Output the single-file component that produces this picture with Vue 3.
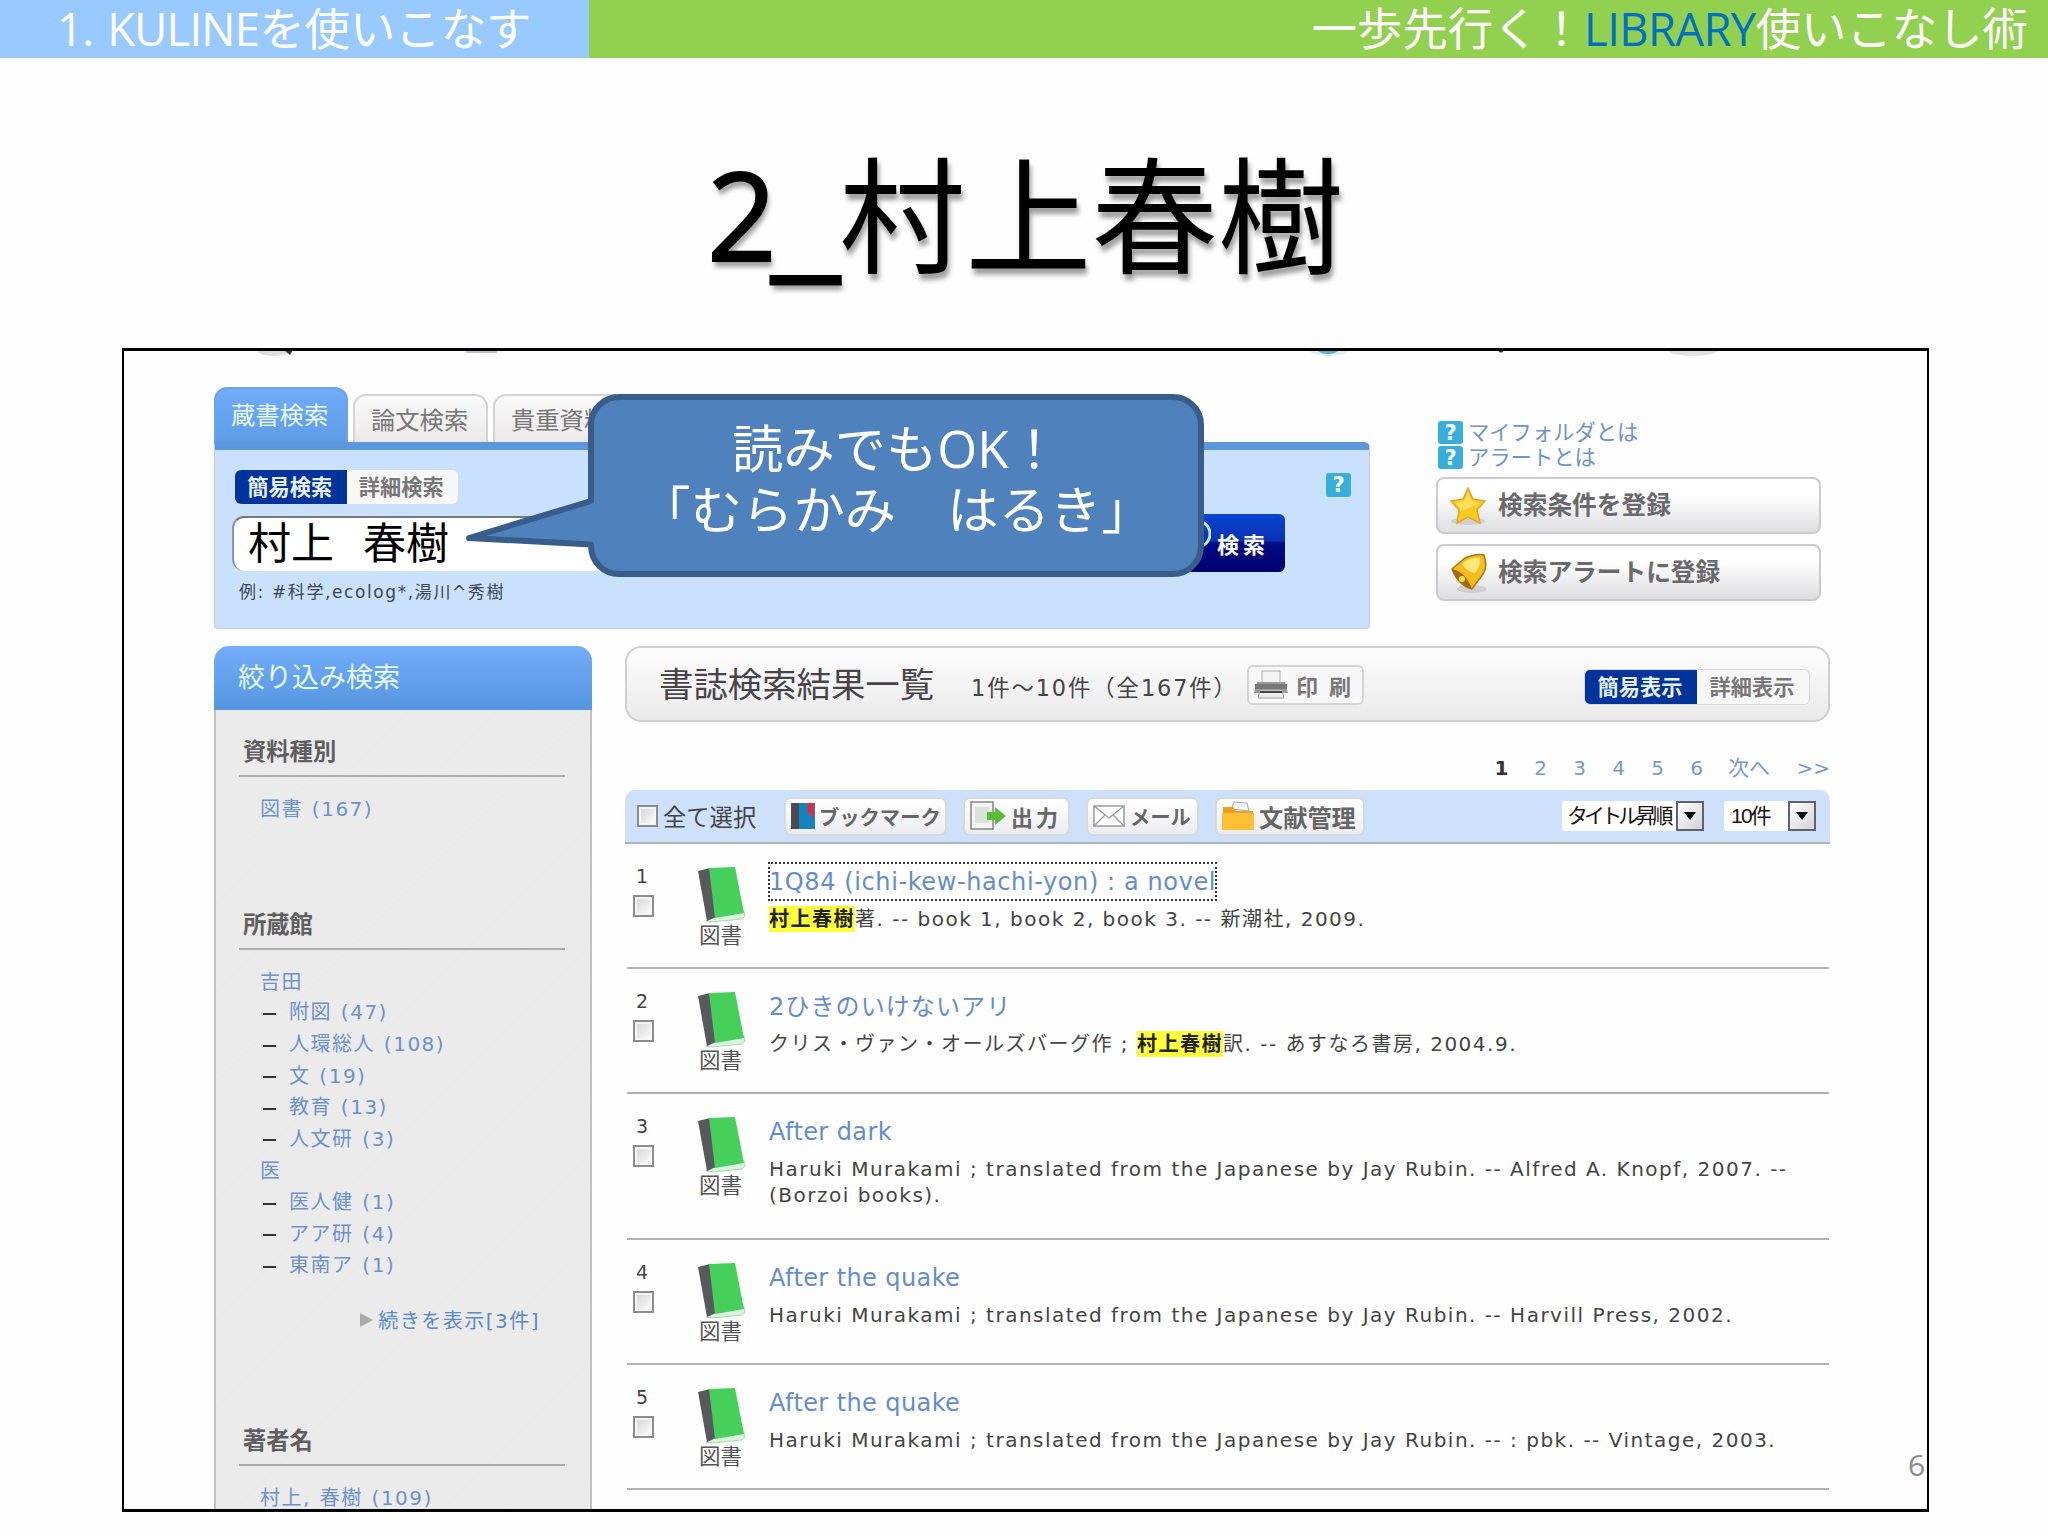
<script setup>
const tabs = [
  { label: "蔵書検索", active: true },
  { label: "論文検索" },
  { label: "貴重資料" },
];

const helpLinks = ["マイフォルダとは", "アラートとは"];

const facets = [
  { title: "資料種別", items: [{ name: "図書", count: 167 }] },
  {
    title: "所蔵館",
    items: [
      { name: "吉田" },
      { name: "附図", count: 47, sub: true },
      { name: "人環総人", count: 108, sub: true },
      { name: "文", count: 19, sub: true },
      { name: "教育", count: 13, sub: true },
      { name: "人文研", count: 3, sub: true },
      { name: "医" },
      { name: "医人健", count: 1, sub: true },
      { name: "アア研", count: 4, sub: true },
      { name: "東南ア", count: 1, sub: true },
    ],
    more: "続きを表示[3件]",
  },
  { title: "著者名", items: [{ name: "村上, 春樹", count: 109 }] },
];

const pages = [1, 2, 3, 4, 5, 6];

const results = [
  { title: "1Q84 (ichi-kew-hachi-yon) : a novel", focused: true, hit: "村上春樹", after: "著. -- book 1, book 2, book 3. -- 新潮社, 2009." },
  { title: "2ひきのいけないアリ", kana: true, before: "クリス・ヴァン・オールズバーグ作 ; ", hit: "村上春樹", after: "訳. -- あすなろ書房, 2004.9." },
  { title: "After dark", tall: true, before: "Haruki Murakami ; translated from the Japanese by Jay Rubin. -- Alfred A. Knopf, 2007. --\n(Borzoi books)." },
  { title: "After the quake", before: "Haruki Murakami ; translated from the Japanese by Jay Rubin. -- Harvill Press, 2002." },
  { title: "After the quake", before: "Haruki Murakami ; translated from the Japanese by Jay Rubin. -- : pbk. -- Vintage, 2003." },
];
</script>

<template>
  <div class="slide">
    <header class="band">
      <div class="band-left"><span class="latin chapter">1. KULINE</span>を使いこなす</div>
      <div class="band-right">一歩先行く！<span class="latin library">LIBRARY</span>使いこなし術</div>
    </header>

    <h1 class="title"><span class="title-num">2</span><span class="title-bar">_</span>村上春樹</h1>

    <section class="shot">
      <!-- 上端で切れているナビアイコンの下側 -->
      <svg class="remnants" width="1803" height="10" viewBox="124 351 1803 10">
        <ellipse cx="274" cy="351" rx="16" ry="5" fill="#dedede" />
        <path d="M284 350h9l-3 5z" fill="#333" />
        <rect x="466" y="350" width="31" height="3" fill="#bcc3c8" />
        <ellipse cx="1329" cy="351" rx="19" ry="5" fill="#e4eef1" />
        <ellipse cx="1328" cy="350" rx="10" ry="4" fill="#54b4cb" />
        <circle cx="1501" cy="350" r="2.5" fill="#333" />
        <ellipse cx="1693" cy="351" rx="24" ry="5" fill="#e2e0e2" />
      </svg>

      <div class="top">
        <div class="search">
          <nav class="tabs">
            <div v-for="t in tabs" :key="t.label" class="tab" :class="{ active: t.active }">{{ t.label }}</div>
          </nav>
          <div class="panel">
            <div class="panel-head">
              <div class="toggle"><span class="on">簡易検索</span><span>詳細検索</span></div>
              <span class="q">?</span>
            </div>
            <div class="query-row">
              <div class="query"><span>村上</span><span>春樹</span></div>
              <div class="go">
                <svg width="34" height="40" viewBox="0 0 34 40">
                  <circle cx="20" cy="15" r="13" fill="none" stroke="#bfe9ff" stroke-width="3" />
                  <path d="M10 26L2 37" stroke="#bfe9ff" stroke-width="4" />
                </svg>
                <span>検索</span>
              </div>
            </div>
            <div class="hint">例: #科学,ecolog*,湯川^秀樹</div>
          </div>
        </div>

        <aside class="side">
          <div v-for="h in helpLinks" :key="h" class="help"><span class="q">?</span>{{ h }}</div>
          <div class="big-btn">
            <svg width="38" height="42" viewBox="0 0 38 42">
              <ellipse cx="18" cy="36" rx="17" ry="4" fill="#cfcfd2" />
              <path d="M18 3l5 11 12 2-8 9 3 13-12-6-11 6 2-13-8-9 12-2z" fill="#fbc91f" stroke="#dfa62c" stroke-width="1.5" />
              <path d="M18 8l4 8 8 2-18 8-6-8 8-2z" fill="#ffe05c" />
            </svg>
            検索条件を登録
          </div>
          <div class="big-btn">
            <svg width="38" height="42" viewBox="0 0 38 42">
              <ellipse cx="22" cy="37" rx="15" ry="4" fill="#cfcfd2" />
              <path d="M2 17L15 6Q27 1 34 3Q38 15 33 22L22 37Q8 33 2 17z" fill="#f5bd1c" stroke="#a87512" stroke-width="1.5" />
              <path d="M12 12Q22 4 30 6Q31 14 25 21Q17 20 12 12z" fill="#ffe77b" />
              <path d="M2 17Q16 20 22 37Q8 33 2 17z" fill="#a36a0b" />
              <circle cx="12" cy="27" r="3" fill="#ffd95a" />
            </svg>
            検索アラートに登録
          </div>
        </aside>
      </div>

      <div class="bottom">
        <aside class="facets">
          <div class="facets-head">絞り込み検索</div>
          <div class="facets-body">
            <section v-for="f in facets" :key="f.title" class="facet">
              <h2>{{ f.title }}</h2>
              <ul>
                <li v-for="i in f.items" :key="i.name" :class="{ sub: i.sub }">
                  <span>{{ i.name }}<template v-if="i.count"> ({{ i.count }})</template></span>
                </li>
              </ul>
              <div v-if="f.more" class="more"><i></i>{{ f.more }}</div>
            </section>
          </div>
        </aside>

        <main class="results">
          <div class="results-head">
            <span class="rh-title">書誌検索結果一覧</span>
            <span class="rh-count">1件～10件（全167件）</span>
            <span class="print">
              <svg width="34" height="30" viewBox="0 0 34 30">
                <path d="M8 1h18v13H8z" fill="#f4f4f4" stroke="#aaa" />
                <path d="M3 12h28l3 11H0z" fill="#9a9a9a" />
                <path d="M1 14h32v5H1z" fill="#777" />
                <path d="M6 20h22l2 8H4z" fill="#eee" stroke="#999" />
                <path d="M6 22h22" stroke="#444" stroke-width="2" />
              </svg>
              <b>印</b><b>刷</b>
            </span>
            <div class="toggle view"><span class="on">簡易表示</span><span>詳細表示</span></div>
          </div>

          <div class="pager">
            <span v-for="p in pages" :key="p" :class="{ current: p === 1 }">{{ p }}</span>
            <span class="next">次へ</span>
            <span class="last">&gt;&gt;</span>
          </div>

          <div class="toolbar">
            <i class="check"></i>
            <span class="all">全て選択</span>
            <span class="btn bookmark">
              <svg width="24" height="26" viewBox="0 0 24 26">
                <rect width="9" height="26" fill="#4b4b50" />
                <rect x="8" width="16" height="26" fill="#1583bd" />
                <path d="M16 0h7v15l-6-5z" fill="#d3314b" />
              </svg>
              ブックマーク
            </span>
            <span class="btn output">
              <svg width="36" height="30" viewBox="0 0 36 30">
                <rect x="1" y="1" width="22" height="27" fill="#f3f4f3" stroke="#858585" stroke-width="1.5" />
                <path d="M5 6h14v16H5z" fill="#d9e4d8" />
                <path d="M17 11h8V6l11 9-11 9v-5h-8z" fill="#57bd35" />
              </svg>
              出力
            </span>
            <span class="btn mail">
              <svg width="32" height="22" viewBox="0 0 32 22">
                <rect x="1" y="1" width="30" height="20" fill="#fff" stroke="#999" stroke-width="1.5" />
                <path d="M1 1l15 12L31 1M1 21l11-11M31 21L20 10" fill="none" stroke="#999" stroke-width="1.3" />
              </svg>
              メール
            </span>
            <span class="btn manage">
              <svg width="32" height="30" viewBox="0 0 32 30">
                <path d="M9 8l3-7 13 1 2 8z" fill="#f5f5f7" stroke="#aaa" />
                <path d="M1 6h10l3 4h17v19H1z" fill="#e9a220" />
                <path d="M0 12h32v17H0z" fill="#fcbf35" />
              </svg>
              文献管理
            </span>
            <span class="select order"><span>タイトル昇順</span><i></i></span>
            <span class="select size"><span>10件</span><i></i></span>
          </div>

          <article v-for="(r, n) in results" :key="n" class="row" :class="{ tall: r.tall }">
            <div class="pick"><span>{{ n + 1 }}</span><i class="check"></i></div>
            <div class="kind">
              <svg width="48" height="56" viewBox="0 0 48 56">
                <path d="M8 54l9-5 29-5 1 5-3 3-30 3z" fill="#d9f3de" stroke="#8fc79b" stroke-width=".7" />
                <path d="M0 4l12-3 6 49-9 4z" fill="#57595c" />
                <path d="M11 1l26-1 9 46-29 5z" fill="#47cf5c" />
              </svg>
              <span>図書</span>
            </div>
            <div class="info">
              <a :class="{ focused: r.focused, kana: r.kana }">{{ r.title }}</a>
              <p>{{ r.before }}<mark v-if="r.hit">{{ r.hit }}</mark>{{ r.after }}</p>
            </div>
          </article>
        </main>
      </div>
    </section>

    <div class="callout">
      <svg width="750" height="192" viewBox="460 390 750 192">
        <path
          d="M619 397H1173A28 28 0 0 1 1201 425V546A28 28 0 0 1 1173 574H619A28 28 0 0 1 591 546V544.500L469 538L591 501V425A28 28 0 0 1 619 397Z"
          fill="#4f81bd" stroke="#385d8a" stroke-width="6" stroke-linejoin="round"
        />
      </svg>
      <div class="callout-text">
        <p>読みでも<span>OK</span>！</p>
        <p>「むらかみ　はるき」</p>
      </div>
    </div>
    <div class="page-no">6</div>
  </div>
</template>

<style>
body { margin: 0; background: #fefefe; }
</style>

<style scoped>
.slide {
  position: relative;
  display: flex; flex-direction: column;
  width: 2048px; height: 1536px; overflow: hidden;
  background: #fefefe; color: #444;
  font-family: "DejaVu Sans", "Noto Sans CJK JP", sans-serif;
}
.slide * { box-sizing: border-box; }

/* 見出し帯 */
.band {
  display: flex; height: 58px; flex: none;
  color: #fff; font: 45.4px/53px "Noto Sans CJK JP", sans-serif;
  white-space: nowrap;
}
.band-left { width: 589px; padding-left: 57px; background: #99caff; }
.band-right { flex: 1; padding-right: 20px; text-align: right; background: #92d050; }
.latin { font-family: "Open Sans", "Noto Sans", sans-serif; line-height: 1; }
.chapter { letter-spacing: -0.8px; word-spacing: 3px; }
.library { color: #0070c0; letter-spacing: -0.6px; }

.title {
  flex: none; height: 290px; margin: 0; padding-left: 3px;
  display: flex; justify-content: center;
  color: #000; text-shadow: 2px 6px 5px rgba(0, 0, 0, 0.38);
  font: 400 126.3px/302px "Noto Sans CJK JP", sans-serif;
}
.title-num { font-family: "Open Sans", sans-serif; font-size: 122px; letter-spacing: -4px; line-height: 313px; -webkit-text-stroke: 2px #000; }
.title-bar { padding-top: 5px; font-family: "Liberation Sans", sans-serif; font-size: 119px; line-height: 312px; -webkit-text-stroke: 3px #000; }

/* 検索画面 */
.shot {
  flex: none; width: 1807px; height: 1164px; margin-left: 122px;
  border: solid #000; border-width: 3px 2px;
  padding-left: 90px; overflow: hidden; position: relative;
}
.remnants { position: absolute; left: 0; top: 0; }
.top { display: flex; }
.search { width: 1156px; }
.tabs { display: flex; align-items: flex-end; height: 91px; gap: 5px; }
.tab {
  width: 135px; height: 48px; padding-left: 16px;
  border: 2px solid #d4d2d4; border-bottom: 0; border-radius: 13px 13px 0 0;
  background: linear-gradient(#fafafa, #ebe8e8);
  color: #777; font-size: 24.3px; line-height: 50px; white-space: nowrap;
}
.tab.active {
  width: 134px; height: 55px; padding-left: 15px;
  border-color: #6ba3e4; background: linear-gradient(#70acfb, #5e9ce4);
  color: #e9fbff; line-height: 54px;
}
.panel {
  height: 187px; padding: 20px 18px 0 17px;
  border: 1px solid #c5cddd; border-top: 8px solid #5b96db;
  border-radius: 0 6px 4px 4px; background: #cae1fe;
}
.panel-head { display: flex; justify-content: space-between; align-items: flex-start; }
.q {
  display: inline-block; width: 25px; height: 24px;
  border-radius: 3px; background: #38aedb; color: #fff;
  font: bold 21px/25px "DejaVu Sans", sans-serif; text-align: center;
}
.panel-head .q { margin-top: 3px; }
.toggle {
  display: flex; width: 223px; height: 34px; margin-left: 3px;
  border-radius: 6px; overflow: hidden; background: #f7f7f8;
  color: #777; font-weight: 700; font-size: 21.2px; line-height: 35px;
}
.toggle span { flex: 1; text-align: center; text-indent: -2px; }
.toggle .on { background: #00349a; color: #e8f2ff; }
.query-row { display: flex; justify-content: space-between; align-items: center; height: 58px; margin-top: 10px; }
.query {
  display: flex; gap: 29px; width: 900px; height: 55px; padding-left: 14px;
  border-top: 2px solid #777; border-left: 2px solid #8a97a8; border-radius: 12px 0 0 12px;
  background: #fff; color: #000; font-size: 43px; line-height: 53px;
}
.go {
  display: flex; align-items: center; gap: 6px; width: 126px; height: 58px;
  margin-right: 66px; padding-left: 26px; border-radius: 6px;
  background: linear-gradient(#0a44cf, #0832b4 46%, #030b84 50%, #00006f);
  color: #fff; font-weight: 700; font-size: 22px; letter-spacing: 4px; white-space: nowrap;
}
.go svg { flex: none; margin: -8px 0 0 -8px; }
.hint { height: 24px; margin: 8px 0 0 7px; font-size: 17px; line-height: 25px; letter-spacing: 1.6px; color: #3b4654; }

.side { width: 385px; margin: 69px 0 0 66px; }
.help { display: flex; align-items: center; height: 25px; padding-left: 2px; gap: 5px; color: #6e93cb; font-size: 21.3px; line-height: 25px; }
.help .q { flex: none; height: 23px; line-height: 24px; }
.big-btn {
  display: flex; align-items: center; height: 57px; margin-top: 10px; padding-left: 12px; gap: 10px;
  border: 2px solid #cbcace; border-radius: 8px;
  background: linear-gradient(#fff 30%, #dedde0);
  color: #6a6a6c; font-weight: 700; font-size: 24.7px; line-height: 50px;
}
.help + .big-btn { margin-top: 7px; }

.bottom { display: flex; gap: 33px; margin-top: 17px; }

/* 絞り込み */
.facets { width: 378px; }
.facets-head {
  height: 64px; padding-left: 24px; border-radius: 15px 15px 0 0;
  background: linear-gradient(#74adfb, #5595df);
  color: #e4fbff; font-size: 27px; line-height: 63px;
}
.facets-body {
  height: 880px; border: solid #c3c1c4; border-width: 0 2px;
  background: repeating-linear-gradient(135deg, #ecebec 0 10px, #eae9ea 11px, #ecebec 12px 21px);
}
.facet h2 {
  height: 67px; margin: 0 25px 16px 23px; padding: 25px 0 0 4px;
  border-bottom: 2px solid #aaa9ab;
  color: #5f5e60; font-size: 23.3px; line-height: 34px;
}
.facet ul { margin: 0 0 58px; padding: 0; list-style: none; }
.facet li {
  display: flex; height: 31.6px; padding-left: 44px;
  color: #6c92cc; font-size: 20px; line-height: 33px; letter-spacing: 1.5px; word-spacing: 1px; white-space: pre;
}
.facet li.sub { align-items: center; gap: 13px; padding-left: 47px; }
.facet li.sub::before { content: ""; width: 13px; height: 2px; margin-top: 2px; background: #333; }
.facet:nth-child(2) ul { margin-bottom: 23px; }
.more {
  display: flex; align-items: center; justify-content: flex-end; gap: 5px;
  height: 30px; margin: 0 50px 64px 0;
  color: #5b8acb; font-size: 20px; letter-spacing: 1.5px;
}
.more i { border: solid transparent; border-width: 7px 0 7px 13px; border-left-color: #aaa; }

/* 検索結果 */
.results { width: 1205px; }
.results-head {
  display: flex; align-items: center; height: 76px; padding: 2px 18px 0 32px;
  border: 2px solid #d0ced0; border-radius: 16px;
  background: linear-gradient(#fdfdfd, #ebeaeb); white-space: nowrap;
}
.rh-title { width: 312px; padding-bottom: 6px; font-size: 34.4px; color: #474547; }
.rh-count { width: 276px; padding-top: 2px; font-size: 22.4px; letter-spacing: 1.9px; }
.print {
  display: flex; align-items: center; gap: 11px; width: 117px; height: 40px; padding-left: 5px;
  border: 2px solid #d4d3d5; border-radius: 6px; background: #f7f7f8;
  font-size: 22px; color: #777;
}
.print svg { margin-right: -3px; }
.view { width: 226px; height: 36px; margin: 3px 0 0 auto; border: 1px solid #d8d7da; }

.pager {
  display: flex; justify-content: flex-end; height: 68px; padding-top: 27px;
  font-size: 20px; line-height: 38px; color: #7898cf; text-align: center;
}
.pager span { width: 39px; }
.pager .current { color: #333; font-weight: 700; }
.pager .next { width: 69px; font-size: 21px; text-indent: -3px; }
.pager .last { width: 45px; text-align: right; }

.toolbar {
  display: flex; align-items: center; height: 54px; padding: 0 14px 0 12px;
  border-radius: 10px 10px 0 0; border-bottom: 2px solid #aeb3be;
  background: #cee1fb; white-space: nowrap;
}
.check {
  width: 21px; height: 22px; border: 2px solid #8c8c8e;
  background: linear-gradient(135deg, #d2d2d5, #fff); box-shadow: inset 0 0 0 2px #f5f5f5;
}
.all { width: 126px; padding-left: 5px; font-size: 23.3px; }
.btn {
  display: flex; align-items: center; height: 39px; gap: 5px; padding-left: 5px;
  border: 2px solid #d5d9e0; border-radius: 7px;
  background: linear-gradient(#fff, #ededef);
  font-size: 20.3px; font-weight: 700; color: #666;
}
.btn svg { flex: none; }
.bookmark { width: 163px; gap: 4px; }
.output { width: 107px; margin-left: 16px; gap: 5px; font-size: 22px; letter-spacing: 3px; }
.mail { width: 113px; margin-left: 16px; gap: 5px; }
.manage { width: 150px; margin-left: 16px; font-size: 24.2px; }
.select {
  display: flex; justify-content: space-between; height: 30px;
  background: #fff; color: #111; border-radius: 3px 0 0 3px;
  font: 21px/30px "Liberation Sans", "Noto Sans CJK JP", sans-serif;
}
.select span { padding-left: 5px; letter-spacing: -3.9px; }
.select i {
  display: flex; align-items: center; justify-content: center;
  width: 28px; border: 2px solid #5f6368; background: linear-gradient(135deg, #fff, #d3d3d8);
}
.select i::after { content: ""; border: solid transparent; border-width: 8px 6px 0; border-top-color: #000; }
.order { width: 142px; margin-left: auto; }
.size { width: 92px; margin-left: 20px; }
.size span { padding-left: 7px; letter-spacing: -1.8px; }

.row { display: flex; height: 125px; margin: 0 1px 0 2px; border-bottom: 2px solid #b3b1b6; }
.row.tall { height: 146px; }
.pick { width: 71px; padding: 20px 0 0 6px; }
.pick span { display: block; width: 18px; height: 31px; font-size: 19px; line-height: 24px; text-align: center; }
.pick .check { display: block; }
.kind { width: 71px; padding-top: 23px; }
.kind svg { display: block; }
.kind span { display: block; width: 48px; font-size: 21.5px; line-height: 26px; padding-left: 1px; white-space: nowrap; color: #555; }
.info { flex: 1; padding-top: 19px; white-space: nowrap; }
.info a { display: inline-block; height: 37px; font-size: 24px; line-height: 38px; letter-spacing: 0.4px; color: #648ccd; }
.info a.focused { outline: 2px dotted #333; outline-offset: -1px; letter-spacing: 0.6px; }
.info a.kana { letter-spacing: 1.1px; }
.info p { margin: 6px 0 0; font-size: 20px; line-height: 26px; letter-spacing: 1.5px; white-space: pre; }
mark { padding: 1px 0; background: #fdfd3a; color: #222; font-weight: 700; }

/* 吹き出し */
.callout { position: absolute; left: 460px; top: 390px; }
.callout-text {
  position: absolute; left: 131px; top: 25px; width: 610px;
  color: #fff; text-align: center; white-space: nowrap;
  font: 51.3px/61px "Noto Sans CJK JP", sans-serif;
}
.callout-text p { height: 61px; margin: 0; }
.callout-text span { font-family: "Open Sans", sans-serif; line-height: 1; }
.page-no {
  position: absolute; left: 1908px; top: 1443px;
  color: #8b8b8b; font: 30px/44px "Open Sans", sans-serif;
}
</style>
